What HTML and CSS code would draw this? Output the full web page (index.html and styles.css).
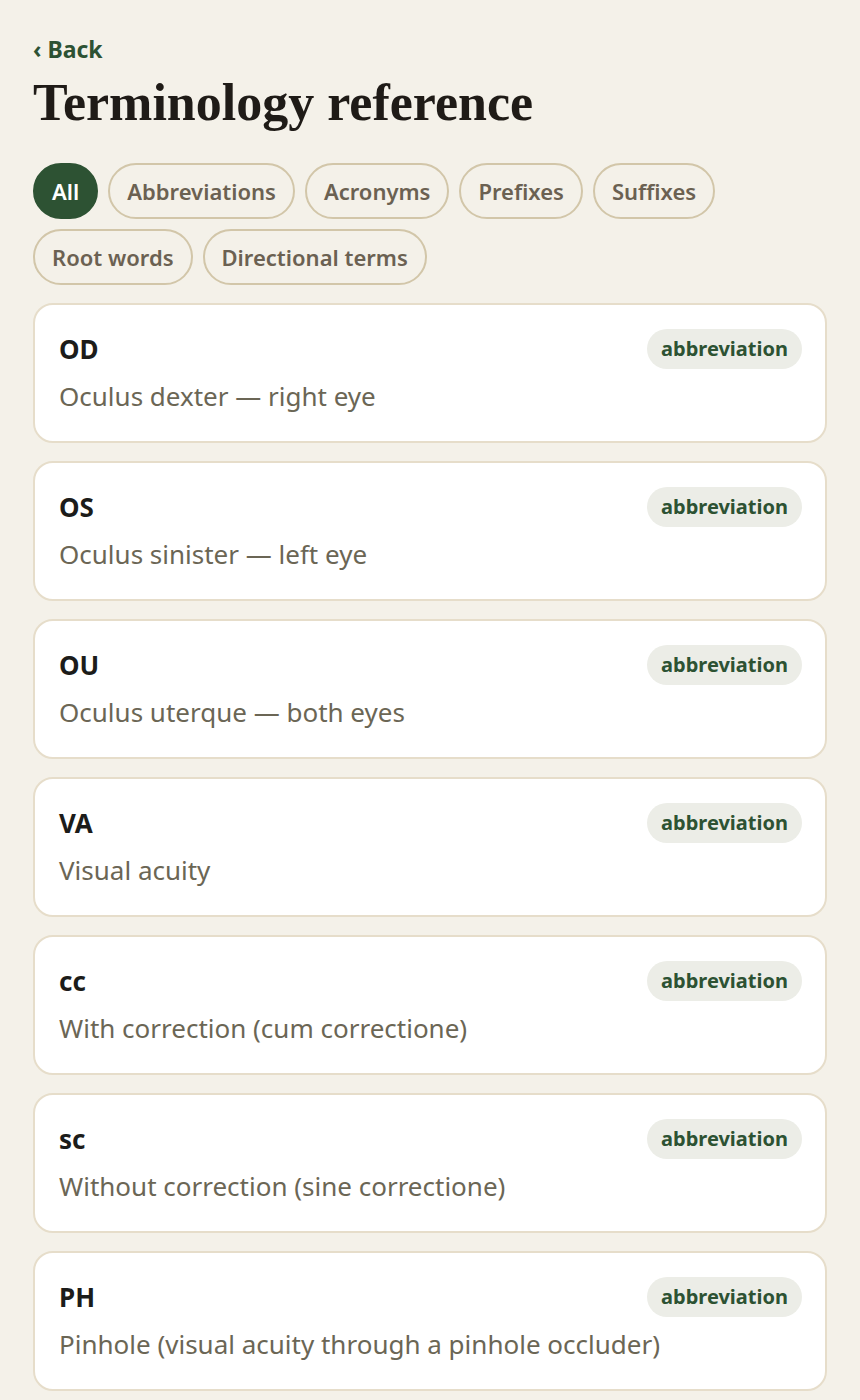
FILE: index.html
```html
<!DOCTYPE html>
<html lang="en">
<head>
    <meta charset="UTF-8">
    <meta name="viewport" content="width=device-width, initial-scale=1.0">
    <title>Terminology reference</title>
    <link rel="stylesheet" href="styles.css">
</head>
<body>
    <div class="page">
        <a class="back" href="#">&lsaquo; Back</a>
        <h1>Terminology reference</h1>

        <div class="filters">
            <button class="chip active">All</button>
            <button class="chip">Abbreviations</button>
            <button class="chip">Acronyms</button>
            <button class="chip">Prefixes</button>
            <button class="chip">Suffixes</button>
            <button class="chip">Root words</button>
            <button class="chip">Directional terms</button>
        </div>

        <div class="terms">
            <div class="card">
                <div class="card-head">
                    <span class="term">OD</span>
                    <span class="badge">abbreviation</span>
                </div>
                <p class="meaning">Oculus dexter — right eye</p>
            </div>
            <div class="card">
                <div class="card-head">
                    <span class="term">OS</span>
                    <span class="badge">abbreviation</span>
                </div>
                <p class="meaning">Oculus sinister — left eye</p>
            </div>
            <div class="card">
                <div class="card-head">
                    <span class="term">OU</span>
                    <span class="badge">abbreviation</span>
                </div>
                <p class="meaning">Oculus uterque — both eyes</p>
            </div>
            <div class="card">
                <div class="card-head">
                    <span class="term">VA</span>
                    <span class="badge">abbreviation</span>
                </div>
                <p class="meaning">Visual acuity</p>
            </div>
            <div class="card">
                <div class="card-head">
                    <span class="term">cc</span>
                    <span class="badge">abbreviation</span>
                </div>
                <p class="meaning">With correction (cum correctione)</p>
            </div>
            <div class="card">
                <div class="card-head">
                    <span class="term">sc</span>
                    <span class="badge">abbreviation</span>
                </div>
                <p class="meaning">Without correction (sine correctione)</p>
            </div>
            <div class="card">
                <div class="card-head">
                    <span class="term">PH</span>
                    <span class="badge">abbreviation</span>
                </div>
                <p class="meaning">Pinhole (visual acuity through a pinhole occluder)</p>
            </div>
        </div>
    </div>
</body>
</html>
```

FILE: styles.css
```css
body {
    margin: 0;
    background-color: #f4f1e9;
    font-family: "Noto Sans", "Open Sans", sans-serif;
    color: #1f1d1a;
}

.page {
    padding: 34px 33px 40px 33px;
}

.back {
    display: block;
    color: #2d5233;
    font-size: 23px;
    font-weight: 700;
    line-height: 30px;
    text-decoration: none;
}

h1 {
    font-family: "Liberation Serif", "DejaVu Serif", serif;
    font-size: 52px;
    font-weight: 700;
    line-height: 58px;
    margin: 10px 0 31px 0;
    color: #1f1b17;
}

.filters {
    display: flex;
    flex-wrap: wrap;
    gap: 10px;
    margin-bottom: 18px;
}

.chip {
    font-family: inherit;
    font-size: 22px;
    font-weight: 600;
    line-height: 28px;
    color: #6b6152;
    background: transparent;
    border: 2px solid #d2c6a9;
    border-radius: 999px;
    padding: 12px 17px;
    margin: 0;
    cursor: pointer;
}

.chip.active {
    background-color: #2d5233;
    border-color: #2d5233;
    color: #fff;
}

.terms {
    display: flex;
    flex-direction: column;
    gap: 18px;
}

.card {
    background-color: #fff;
    border: 2px solid #e6ddca;
    border-radius: 20px;
    padding: 24px 23px 27px 24px;
}

.card-head {
    display: flex;
    justify-content: space-between;
    align-items: center;
    height: 40px;
}

.term {
    font-size: 26px;
    font-weight: 700;
    color: #1c1c1a;
}

.badge {
    background-color: #ecede7;
    color: #2d5233;
    font-size: 20px;
    font-weight: 700;
    line-height: 40px;
    padding: 0 14px;
    border-radius: 999px;
}

.meaning {
    margin: 10px 0 0 0;
    font-size: 26px;
    line-height: 35px;
    color: #6b6655;
}
```
